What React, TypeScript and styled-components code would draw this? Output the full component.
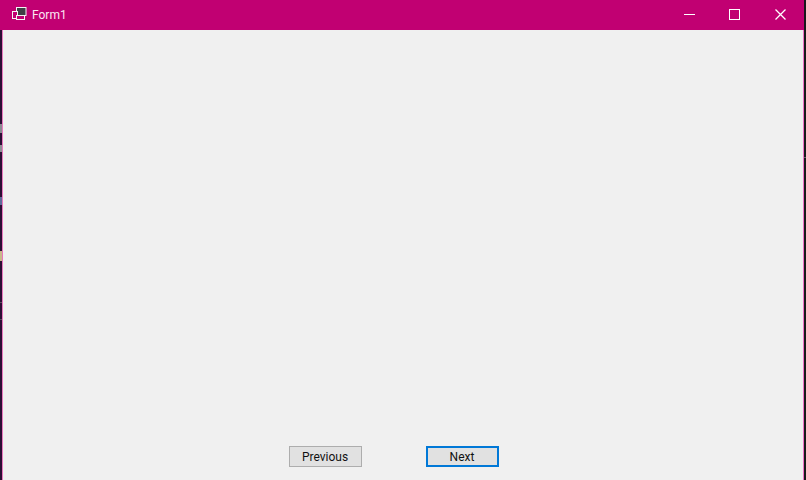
import styled, { createGlobalStyle } from 'styled-components'

const GlobalStyle = createGlobalStyle`
  html, body, #root {
    margin: 0;
    height: 100%;
    overflow: hidden;
  }
  body {
    font-family: Roboto, "Noto Sans", sans-serif;
  }
`

const Desktop = styled.div`
  position: relative;
  width: 806px;
  height: 480px;
  display: flex;
  flex-direction: column;
  background: linear-gradient(90deg, #2b0f35 0 3px, #19171c 3px);
`

const TitleBar = styled.div`
  flex: none;
  height: 30px;
  width: 804px;
  background: #c10072;
  display: flex;
  align-items: center;
  color: #fff;
`

const AppIcon = styled.svg`
  width: 15px;
  height: 14px;
  margin-left: 12px;
  margin-bottom: 2px;
`

const Title = styled.span`
  margin-left: 5px;
  font-size: 12px;
  color: #fbe6f2;
  flex: 1;
`

const WindowButton = styled.div<{ $width: number }>`
  width: ${(p) => p.$width}px;
  height: 30px;
  padding-bottom: 1px;
  box-sizing: border-box;
  display: flex;
  align-items: center;
  justify-content: center;
`

const Edge = styled.div`
  flex: 1;
  margin-left: 2px;
  width: 802px;
  box-sizing: border-box;
  border-left: 1px solid #e878bc;
  border-right: 1px solid #ee70c6;
  background: #f0f0f0;
  display: flex;
  flex-direction: column;
  justify-content: flex-end;
`

const ButtonRow = styled.div`
  display: flex;
  gap: 64px;
  padding-left: 286px;
  padding-bottom: 13px;
`

const FormButton = styled.div<{ $active?: boolean }>`
  width: 73px;
  height: 21px;
  padding-right: 1px;
  box-sizing: border-box;
  background: #e1e1e1;
  border: ${(p) => (p.$active ? '2px solid #0078d7' : '1px solid #adadad')};
  display: flex;
  align-items: center;
  justify-content: center;
  font-size: 12px;
  color: #111;
`

// bits of whatever sits behind the window, showing at its edges
const Smudge = styled.div<{ $top: number; $height: number; $color: string; $right?: boolean }>`
  position: absolute;
  top: ${(p) => p.$top}px;
  ${(p) => (p.$right ? 'right: 0;' : 'left: 0;')}
  width: 2px;
  height: ${(p) => p.$height}px;
  background: ${(p) => p.$color};
`

const smudges = [
  { top: 124, height: 9, color: '#8a8a92' },
  { top: 145, height: 7, color: '#8f8f96' },
  { top: 197, height: 8, color: '#5f6a9a' },
  { top: 251, height: 10, color: '#c8b98a' },
  { top: 302, height: 1, color: '#5a5060' },
  { top: 319, height: 1, color: '#5a5060' },
  { top: 157, height: 1, color: '#66666c', right: true },
]

export default function App() {
  return (
    <Desktop>
      <GlobalStyle />
      <TitleBar>
        <AppIcon viewBox="0 0 15 14">
          <rect x="4.5" y="0.5" width="9.5" height="8" fill="#3f3f45" stroke="#f4f4f4" />
          <rect x="0.5" y="4.5" width="5" height="7" fill="#c10072" stroke="#f4f4f4" />
          <rect x="4.5" y="8.5" width="8" height="4" fill="#c10072" stroke="#f4f4f4" />
        </AppIcon>
        <Title>Form1</Title>
        <WindowButton $width={45}>
          <svg width="11" height="11" viewBox="0 0 11 11">
            <path d="M0 5.5H11" stroke="#fff" fill="none" />
          </svg>
        </WindowButton>
        <WindowButton $width={45}>
          <svg width="11" height="11" viewBox="0 0 11 11">
            <rect x="0.5" y="0.5" width="10" height="10" stroke="#fff" fill="none" />
          </svg>
        </WindowButton>
        <WindowButton $width={47}>
          <svg width="11" height="11" viewBox="0 0 11 11">
            <path d="M0.5 0.5L10.5 10.5M10.5 0.5L0.5 10.5" stroke="#fff" strokeWidth="1.3" fill="none" />
          </svg>
        </WindowButton>
      </TitleBar>
      <Edge>
        <ButtonRow>
          <FormButton>Previous</FormButton>
          <FormButton $active>Next</FormButton>
        </ButtonRow>
      </Edge>
      {smudges.map((s) => (
        <Smudge key={s.top} $top={s.top} $height={s.height} $color={s.color} $right={s.right} />
      ))}
    </Desktop>
  )
}
